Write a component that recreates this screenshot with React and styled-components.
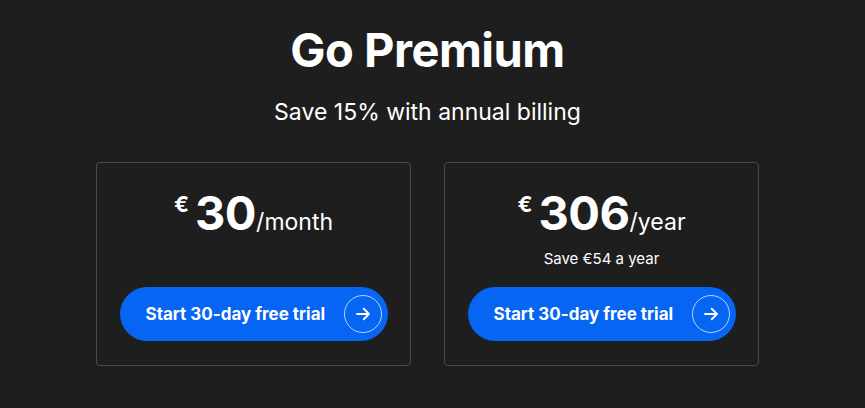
import React from "react";
import styled, { createGlobalStyle } from "styled-components";

const Global = createGlobalStyle`
  html, body { margin: 0; padding: 0; background: #1e1e1e; }
  body { font-family: Inter, "Noto Sans", sans-serif; color: #fff; -webkit-font-smoothing: antialiased; }
`;

const Page = styled.main`
  width: 865px;
  height: 408px;
  box-sizing: border-box;
  padding: 22px 10px 0 0;
  display: flex;
  flex-direction: column;
  align-items: center;
`;

const Title = styled.h1`
  margin: 0;
  font-size: 47px;
  font-weight: 700;
  line-height: 56px;
  letter-spacing: -0.5px;
`;

const Subtitle = styled.p`
  margin: 20px 0 0;
  font-size: 23px;
  line-height: 28px;
  font-weight: 400;
`;

const Cards = styled.div`
  margin-top: 36px;
  display: flex;
  gap: 33px;
`;

const Card = styled.section`
  width: 315px;
  height: 204px;
  box-sizing: border-box;
  border: 1px solid #4a4a4a;
  border-radius: 4px;
  padding: 26px 23px 24px;
  display: flex;
  flex-direction: column;
  align-items: center;
`;

const Price = styled.div`
  display: flex;
  align-items: baseline;
  line-height: 1;
`;

const Currency = styled.span`
  font-size: 22px;
  font-weight: 700;
  align-self: flex-start;
  margin-top: 4px;
  margin-right: 6px;
`;

const Amount = styled.span`
  font-size: 47px;
  font-weight: 700;
  letter-spacing: -0.5px;
`;

const Period = styled.span`
  font-size: 23px;
  font-weight: 400;
`;

const Note = styled.p`
  margin: 14px 0 0;
  font-size: 15px;
  line-height: 18px;
`;

const Button = styled.button`
  margin-top: auto;
  width: 268px;
  height: 54px;
  border: 0;
  border-radius: 27px;
  background: #0665f2;
  color: #fff;
  font-family: inherit;
  font-size: 17px;
  font-weight: 700;
  display: flex;
  align-items: center;
  justify-content: space-between;
  padding: 0 6px 0 26px;
  cursor: pointer;
`;

const Circle = styled.span`
  width: 38px;
  height: 38px;
  box-sizing: border-box;
  border: 1px solid rgba(255, 255, 255, 0.7);
  border-radius: 50%;
  display: flex;
  align-items: center;
  justify-content: center;
`;

const Arrow = () => (
  <svg width="18" height="18" viewBox="0 0 24 24" fill="none" stroke="#fff" strokeWidth="2.4" strokeLinecap="round" strokeLinejoin="round">
    <path d="M4 12h15" />
    <path d="M13 5l7 7-7 7" />
  </svg>
);

const Plan = ({ amount, period, note }) => (
  <Card>
    <Price>
      <Currency>€</Currency>
      <Amount>{amount}</Amount>
      <Period>/{period}</Period>
    </Price>
    {note && <Note>{note}</Note>}
    <Button>
      Start 30-day free trial
      <Circle><Arrow /></Circle>
    </Button>
  </Card>
);

export default function App() {
  return (
    <>
      <Global />
      <Page>
        <Title>Go Premium</Title>
        <Subtitle>Save 15% with annual billing</Subtitle>
        <Cards>
          <Plan amount="30" period="month" />
          <Plan amount="306" period="year" note="Save €54 a year" />
        </Cards>
      </Page>
    </>
  );
}
